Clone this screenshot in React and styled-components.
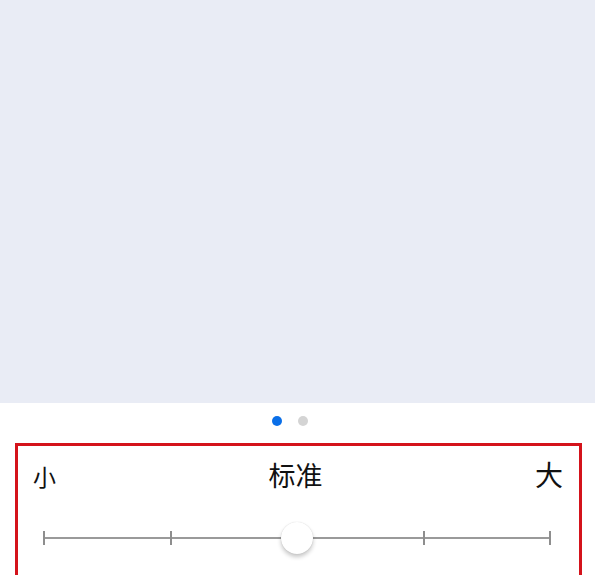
import React from 'react'
import styled, { createGlobalStyle } from 'styled-components'

const GlobalStyle = createGlobalStyle`
  html, body {
    margin: 0;
    padding: 0;
    background: #fff;
    font-family: "Noto Sans CJK SC", "Noto Sans", sans-serif;
  }
`

const Page = styled.div`
  width: 595px;
  height: 575px;
  overflow: hidden;
  display: flex;
  flex-direction: column;
  background: #fff;
`

const Preview = styled.div`
  height: 403px;
  flex-shrink: 0;
  background: #e9ecf5;
`

const Dots = styled.div`
  display: flex;
  justify-content: center;
  gap: 16px;
  padding: 13px 16px 17px 0;
`

const Dot = styled.span`
  width: 10px;
  height: 10px;
  border-radius: 50%;
  background: ${p => (p.$active ? '#0a6fe8' : '#d4d4d4')};
`

const Panel = styled.div`
  margin: 0 13px 0 15px;
  border: 3px solid #d4131b;
  border-bottom: none;
  padding: 12px 16px 0 15px;
  flex: 1;
`

const Labels = styled.div`
  display: flex;
  justify-content: space-between;
  align-items: baseline;
  color: #111;
`

const Label = styled.span`
  font-size: ${p => p.$size}px;
  line-height: 1.2;
`

const Slider = styled.div`
  position: relative;
  margin: 38px 12px 0 10px;
  height: 16px;
  display: flex;
  justify-content: space-between;
  align-items: center;
`

const Track = styled.div`
  position: absolute;
  left: 0;
  right: 0;
  top: 7px;
  height: 2px;
  background: #9a9a9a;
`

const Tick = styled.span`
  width: 2px;
  height: 14px;
  background: #8e8e8e;
  position: relative;
`

const Thumb = styled.div`
  position: absolute;
  left: 50%;
  top: 50%;
  width: 32px;
  height: 32px;
  margin: -16px 0 0 -16px;
  border-radius: 50%;
  background: #fff;
  box-shadow: 0 3px 4px rgba(0, 0, 0, 0.22), 0 0 1px rgba(0, 0, 0, 0.18);
`

export default function App() {
  return (
    <Page>
      <GlobalStyle />
      <Preview />
      <Dots>
        <Dot $active />
        <Dot />
      </Dots>
      <Panel>
        <Labels>
          <Label $size={23}>小</Label>
          <Label $size={27}>标准</Label>
          <Label $size={28}>大</Label>
        </Labels>
        <Slider>
          <Track />
          {[0, 1, 2, 3, 4].map(i => <Tick key={i} />)}
          <Thumb />
        </Slider>
      </Panel>
    </Page>
  )
}
